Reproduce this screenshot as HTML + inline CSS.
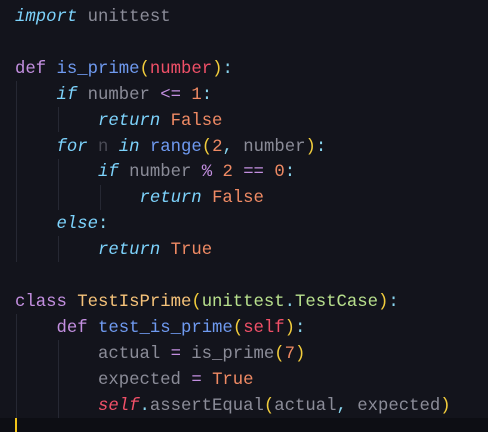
<!DOCTYPE html>
<html><head><style>
html,body{margin:0;padding:0;background:#13141c;width:488px;height:432px;overflow:hidden}
pre{margin:0;position:absolute;left:15px;top:5px;font-family:"Liberation Mono",monospace;font-size:17.3px;line-height:25.9px;color:#8b8c98}
.k{color:#7dd3fc;font-style:italic}
.d{color:#c38fe0}
.f{color:#6f9af0}
.p{color:#f2cd3c}
.r{color:#f05068}
.n{color:#ef8a64}
.o{color:#c38fe0}
.c{color:#f6c37a}
.g{color:#b8e08d}
.pu{color:#89d6f0}
.s{color:#f05068;font-style:italic}
.dim{color:#4a4b55}
.g1{position:absolute;width:1px;background:#262833}
.cl{position:absolute;left:0;top:418px;width:488px;height:14px;background:#0d0e14}
.cur{position:absolute;left:15px;top:418px;width:2px;height:14px;background:#f2c418}
</style></head><body>
<div class="g1" style="left:16px;top:81px;height:181px"></div>
<div class="g1" style="left:58px;top:107px;height:25px"></div>
<div class="g1" style="left:58px;top:159px;height:51px"></div>
<div class="g1" style="left:100px;top:185px;height:25px"></div>
<div class="g1" style="left:58px;top:236px;height:26px"></div>
<div class="g1" style="left:16px;top:314px;height:104px"></div>
<div class="g1" style="left:58px;top:340px;height:78px"></div>
<div class="cl"></div><div class="cur"></div>
<pre><span class="k">import</span> unittest

<span class="d">def</span> <span class="f">is_prime</span><span class="p">(</span><span class="r">number</span><span class="p">)</span><span class="pu">:</span>
    <span class="k">if</span> number <span class="o">&lt;=</span> <span class="n">1</span><span class="pu">:</span>
        <span class="k">return</span> <span class="n">False</span>
    <span class="k">for</span> <span class="dim">n</span> <span class="k">in</span> <span class="f">range</span><span class="p">(</span><span class="n">2</span><span class="pu">,</span> number<span class="p">)</span><span class="pu">:</span>
        <span class="k">if</span> number <span class="o">%</span> <span class="n">2</span> <span class="o">==</span> <span class="n">0</span><span class="pu">:</span>
            <span class="k">return</span> <span class="n">False</span>
    <span class="k">else</span><span class="pu">:</span>
        <span class="k">return</span> <span class="n">True</span>

<span class="d">class</span> <span class="c">TestIsPrime</span><span class="p">(</span><span class="g">unittest</span><span class="pu">.</span><span class="g">TestCase</span><span class="p">)</span><span class="pu">:</span>
    <span class="d">def</span> <span class="f">test_is_prime</span><span class="p">(</span><span class="r">self</span><span class="p">)</span><span class="pu">:</span>
        actual <span class="o">=</span> is_prime<span class="p">(</span><span class="n">7</span><span class="p">)</span>
        expected <span class="o">=</span> <span class="n">True</span>
        <span class="s">self</span><span class="pu">.</span>assertEqual<span class="p">(</span>actual<span class="pu">,</span> expected<span class="p">)</span>
</pre>
</body></html>
